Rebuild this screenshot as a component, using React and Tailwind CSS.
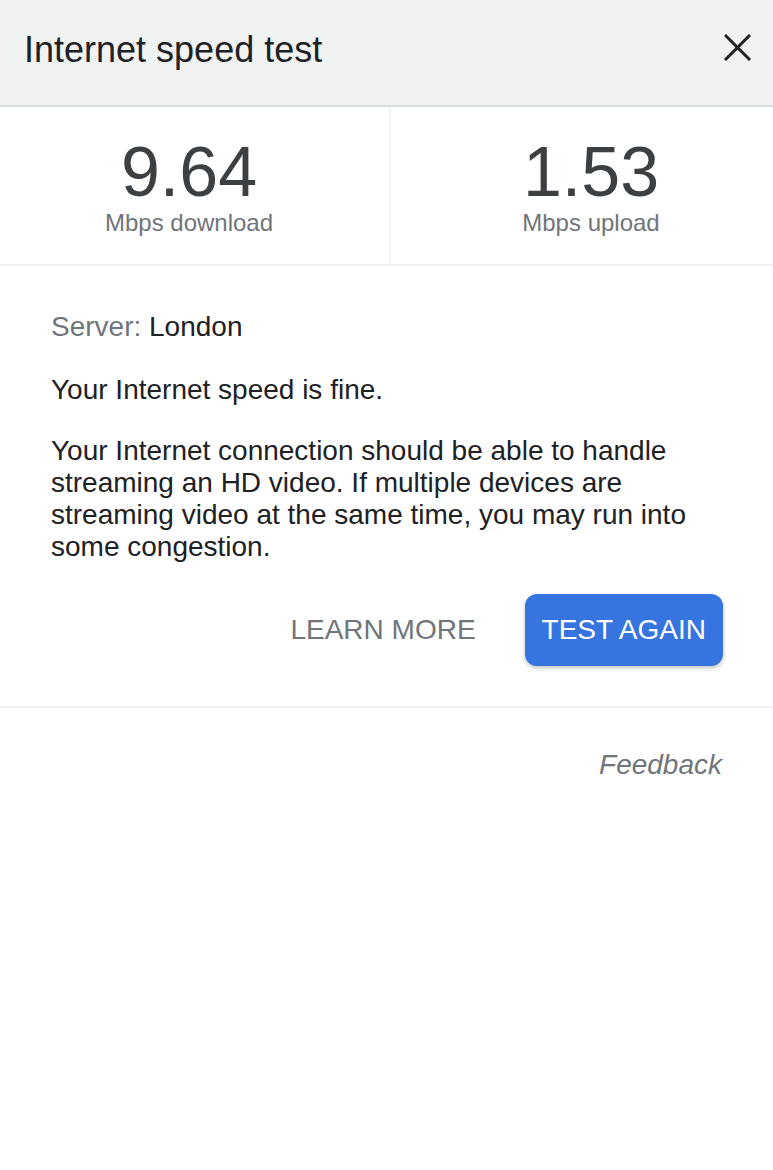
import { useState } from 'react';

// Speed test result card
const stats = [
  { value: '9.64', label: 'Mbps download', pad: 'pr-[11px]' },
  { value: '1.53', label: 'Mbps upload', pad: 'pl-[18px]' },
];

function CloseIcon() {
  return (
    <svg width="27" height="27" viewBox="0 0 27 27" fill="none" stroke="#202124" strokeWidth="3" strokeLinecap="square">
      <path d="M2 2 L25 25 M25 2 L2 25" />
    </svg>
  );
}

export default function App() {
  const [runs, setRuns] = useState(1);

  return (
    <div className="min-h-[1170px] w-[773px] bg-white font-['Liberation_Sans',Arial,sans-serif] text-[#202124]">
      {/* Header */}
      <div className="flex h-[107px] items-start justify-between border-b-2 border-[#d9dcdc] bg-[#f1f3f3] pl-[24px] pr-[22px]">
        <h1 className="pt-[32px] text-[36px] leading-[36px] font-normal">Internet speed test</h1>
        <button className="mt-[34px]" aria-label="Close">
          <CloseIcon />
        </button>
      </div>

      {/* Download / upload */}
      <div className="grid grid-cols-[391px_1fr] border-b-2 border-[#f1f1f1]">
        {stats.map((s, i) => (
          <div
            key={s.label}
            className={`flex flex-col items-center pt-[31px] pb-[29px] ${s.pad} ${i === 0 ? 'border-r-2 border-[#f1f1f1]' : ''}`}
          >
            <div className="text-[70px] leading-[68px] text-[#3c4043]">{s.value}</div>
            <div className="mt-[5px] text-[24px] leading-[24px] text-[#70757a]">{s.label}</div>
          </div>
        ))}
      </div>

      {/* Result text */}
      <div className="border-b-2 border-[#f1f1f1] pl-[51px] pr-[50px] pt-[45px] pb-[40px] text-[28px] leading-[32px]">
        <p>
          <span className="text-[#70757a]">Server: </span>London
        </p>
        <p className="mt-[31px]">Your Internet speed is fine.</p>
        <p className="mt-[29px]">
          Your Internet connection should be able to handle streaming an HD video. If multiple devices are streaming
          video at the same time, you may run into some congestion.
        </p>

        <div className="mt-[31px] flex items-center justify-end gap-[32px]">
          <button className="px-[17px] text-[28px] leading-[32px] text-[#70757a]">LEARN MORE</button>
          <button
            onClick={() => setRuns(runs + 1)}
            className="h-[72px] rounded-[12px] bg-[#3674e0] px-[17px] text-[28px] leading-[32px] text-white shadow-[0_2px_4px_rgba(0,0,0,0.25)]"
          >
            TEST AGAIN
          </button>
        </div>
      </div>

      {/* Footer */}
      <div className="flex justify-end pr-[51px] pt-[41px]">
        <a className="text-[28px] leading-[32px] italic text-[#70757a]">Feedback</a>
      </div>
    </div>
  );
}
